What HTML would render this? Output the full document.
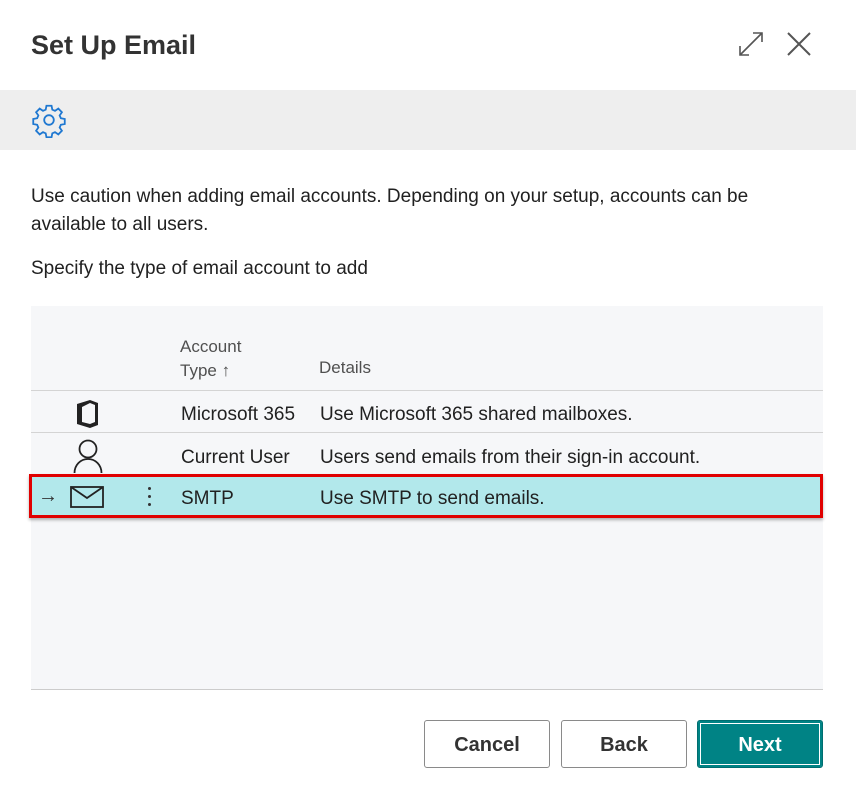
<!DOCTYPE html>
<html><head><meta charset="utf-8"><style>
*{margin:0;padding:0;box-sizing:border-box}
body{width:856px;height:801px;background:#fff;font-family:"Liberation Sans",sans-serif;color:#212121;position:relative;overflow:hidden}
.a{position:absolute}
.t{font-size:19px;white-space:nowrap}
.btn{position:absolute;top:720px;height:48px;border:1px solid #8a8a8a;border-radius:3px;background:#fff;font-size:20px;font-weight:bold;display:flex;align-items:center;justify-content:center;color:#333;padding-top:3px}
</style></head><body>
<div class="a" style="left:31px;top:30px;font-size:27px;font-weight:bold;color:#333">Set Up Email</div>
<svg class="a" style="left:738px;top:31px" width="26" height="26" viewBox="0 0 26 26" fill="none" stroke="#555" stroke-width="1.6"><path d="M2 24L24 2M15 2h9v9M2 15v9h9"/></svg>
<svg class="a" style="left:786px;top:31px" width="26" height="26" viewBox="0 0 26 26" fill="none" stroke="#555" stroke-width="2"><path d="M2 2L24 24M24 2L2 24"/></svg>
<div class="a" style="left:0;top:90px;width:856px;height:60px;background:#eeeeee"></div>
<svg class="a" style="left:31px;top:102px" width="36" height="36" viewBox="0 0 24 24" fill="none" stroke="#1f78d1" stroke-width="1.2"><circle cx="12" cy="12" r="3.2"/><path d="M10.3 2.5h3.4l.5 2.6 1.8.8 2.2-1.5 2.4 2.4-1.5 2.2.8 1.8 2.6.5v3.4l-2.6.5-.8 1.8 1.5 2.2-2.4 2.4-2.2-1.5-1.8.8-.5 2.6h-3.4l-.5-2.6-1.8-.8-2.2 1.5-2.4-2.4 1.5-2.2-.8-1.8-2.6-.5v-3.4l2.6-.5.8-1.8-1.5-2.2 2.4-2.4 2.2 1.5 1.8-.8z"/></svg>
<div class="a t" style="left:31px;top:183px;line-height:28px;white-space:normal;width:785px">Use caution when adding email accounts. Depending on your setup, accounts can be available to all users.</div>
<div class="a t" style="left:31px;top:258px">Specify the type of email account to add</div>
<div class="a" style="left:31px;top:306px;width:792px;height:384px;background:#f6f7f9;border-bottom:1px solid #ccc"></div>
<div class="a" style="left:180px;top:335px;font-size:17px;line-height:24px;color:#505050">Account<br>Type ↑</div>
<div class="a" style="left:319px;top:358px;font-size:17px;color:#505050">Details</div>
<div class="a" style="left:31px;top:390px;width:792px;height:1px;background:#d4d4d4"></div>
<div class="a" style="left:31px;top:432px;width:792px;height:1px;background:#d4d4d4"></div>
<svg class="a" style="left:74px;top:399px" width="26" height="30" viewBox="0 0 26 30"><path d="M3 5L16 1l8 3v22l-8 3-13-4V5zM8 8v15l8 2V4z" fill="#222"/><path d="M16 4v21l5-2V6z" fill="#f6f7f9"/></svg>
<div class="a t" style="left:181px;top:404px">Microsoft 365</div>
<div class="a t" style="left:320px;top:404px">Use Microsoft 365 shared mailboxes.</div>
<svg class="a" style="left:72px;top:439px" width="32" height="34" viewBox="0 0 32 34" fill="none" stroke="#222" stroke-width="1.8"><circle cx="16" cy="10" r="8.5"/><path d="M2.5 34c0-8 6-14 13.5-14s13.5 6 13.5 14"/></svg>
<div class="a t" style="left:181px;top:447px">Current User</div>
<div class="a t" style="left:320px;top:447px">Users send emails from their sign-in account.</div>
<div class="a" style="left:29px;top:474px;width:794px;height:44px;background:#b2e8eb;border:3px solid #e00000;box-shadow:0 2px 3px rgba(0,0,0,.3)"></div>
<div class="a" style="left:38px;top:485px;font-size:20px;color:#333">→</div>
<svg class="a" style="left:70px;top:486px" width="34" height="22" viewBox="0 0 34 22" fill="none" stroke="#222" stroke-width="1.8"><rect x="1" y="1" width="32" height="20"/><path d="M1 1l16 11 16-11"/></svg>
<div class="a" style="left:148px;top:487px;width:3px;height:3px;background:#333;border-radius:2px;box-shadow:0 8px 0 #333,0 16px 0 #333"></div>
<div class="a t" style="left:181px;top:488px">SMTP</div>
<div class="a t" style="left:320px;top:488px">Use SMTP to send emails.</div>
<div class="btn" style="left:424px;width:126px">Cancel</div>
<div class="btn" style="left:561px;width:126px">Back</div>
<div class="btn" style="left:697px;width:126px;background:#008385;border-color:#006e70;color:#fff;box-shadow:inset 0 0 0 2px #008385,inset 0 0 0 3px #fff">Next</div>
</body></html>
